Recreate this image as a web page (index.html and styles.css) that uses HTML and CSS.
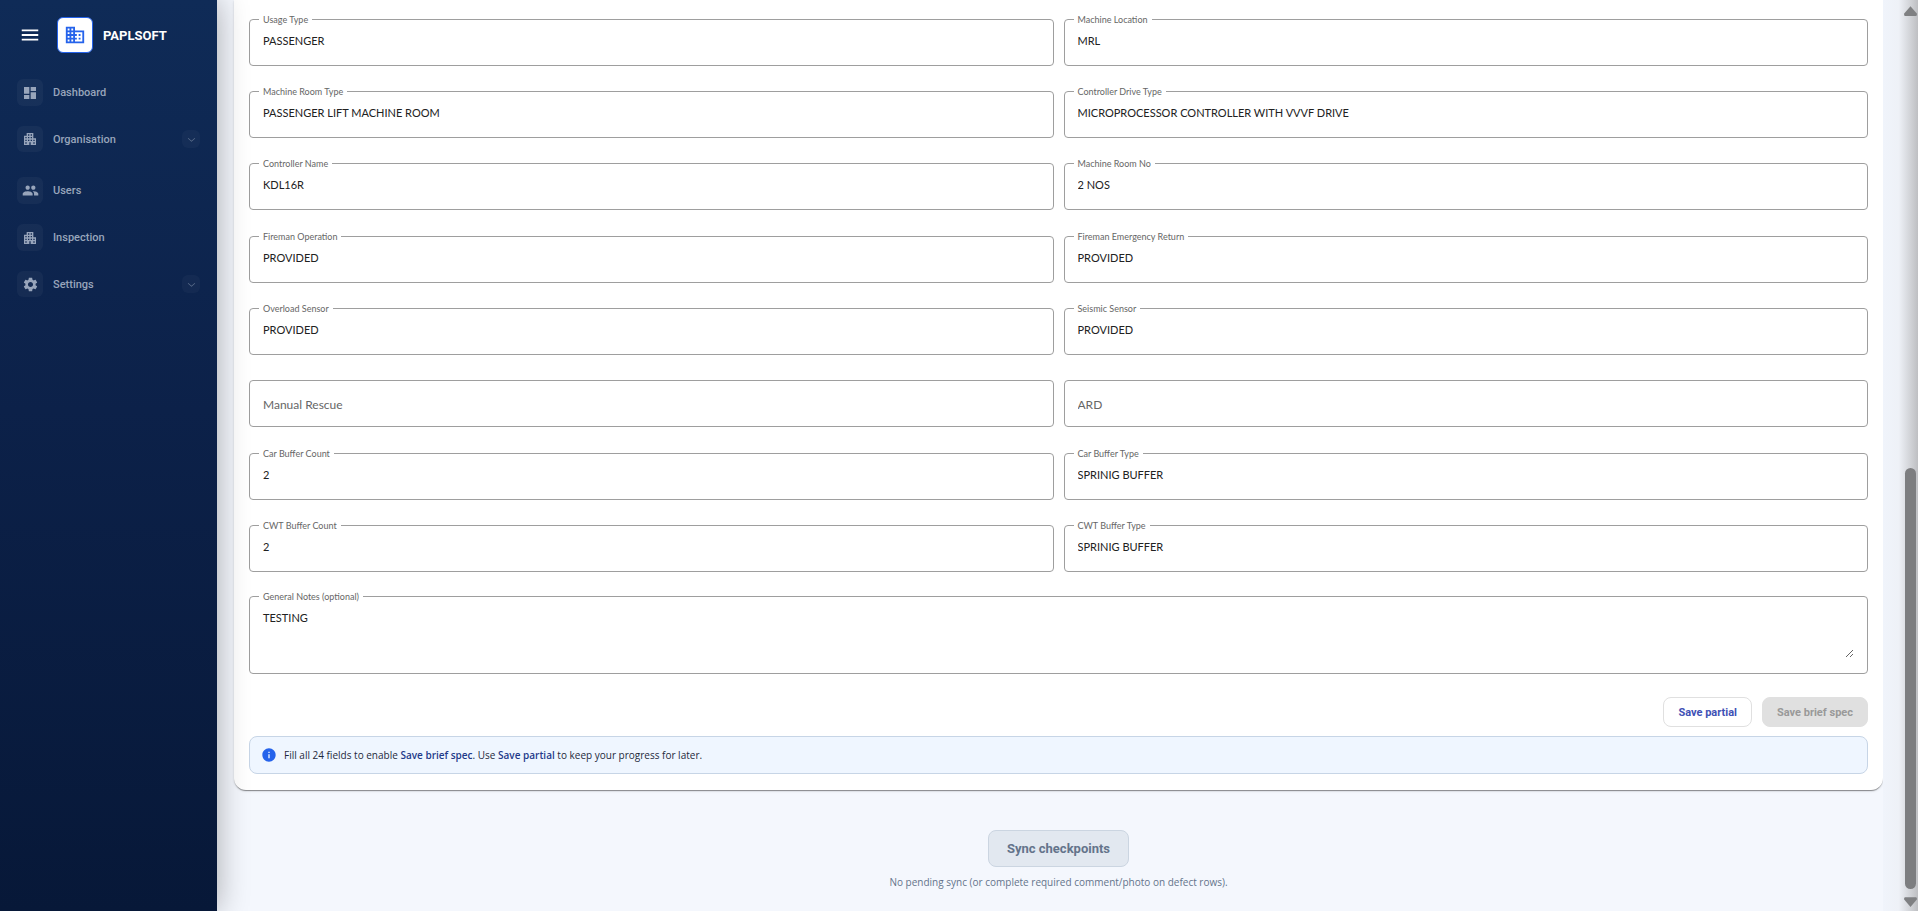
FILE: index.html
```html
<!DOCTYPE html>
<html lang="en">
<head>
<meta charset="utf-8">
<title>PAPLSOFT</title>
<link rel="stylesheet" href="styles.css">
</head>
<body>
<div class="app">
  <aside class="sidebar">
    <div class="brand">
      <button class="menu-button" type="button" aria-label="Toggle menu"><svg viewBox="0 0 24 24"><path d="M3 18h18v-2H3v2zm0-5h18v-2H3v2zm0-7v2h18V6H3z"/></svg></button>
      <span class="logo"><svg viewBox="0 0 24 24"><path d="M12 7V3H2v18h20V7H12zM6 19H4v-2h2v2zm0-4H4v-2h2v2zm0-4H4V9h2v2zm0-4H4V5h2v2zm4 12H8v-2h2v2zm0-4H8v-2h2v2zm0-4H8V9h2v2zm0-4H8V5h2v2zm10 12h-8v-2h2v-2h-2v-2h2v-2h-2V9h8v10zm-2-8h-2v2h2v-2zm0 4h-2v2h2v-2z"/></svg></span>
      <span class="brand-name">PAPLSOFT</span>
    </div>
    <nav class="nav">
      <a class="nav-item" href="#dashboard"><span class="nav-icon"><svg viewBox="0 0 24 24"><path d="M3 13h8V3H3v10zm0 8h8v-6H3v6zm10 0h8V11h-8v10zm0-18v6h8V3h-8z"/></svg></span>Dashboard</a>
      <a class="nav-item expandable" href="#organisation"><span class="nav-icon"><svg viewBox="0 0 24 24"><path d="M17 11V3H7v4H3v14h8v-4h2v4h8V11h-4zM7 19H5v-2h2v2zm0-4H5v-2h2v2zm0-4H5V9h2v2zm4 4H9v-2h2v2zm0-4H9V9h2v2zm0-4H9V5h2v2zm4 8h-2v-2h2v2zm0-4h-2V9h2v2zm0-4h-2V5h2v2zm4 12h-2v-2h2v2zm0-4h-2v-2h2v2z"/></svg></span>Organisation<span class="chevron"><svg viewBox="0 0 24 24"><path d="M5 8.600 12 14.600l7-6 1 1.400-8 7-8-7z"/></svg></span></a>
      <a class="nav-item" href="#users"><span class="nav-icon wide"><svg viewBox="0 0 24 24"><path d="M16 11c1.660 0 2.990-1.340 2.990-3S17.660 5 16 5s-3 1.340-3 3 1.340 3 3 3zm-8 0c1.660 0 2.990-1.340 2.990-3S9.660 5 8 5 5 6.340 5 8s1.340 3 3 3zm0 2c-2.330 0-7 1.170-7 3.500V19h14v-2.500C15 14.170 10.330 13 8 13zm8 0c-.29 0-.62.020-.97.050 1.160.840 1.970 1.970 1.970 3.450V19h6v-2.500c0-2.330-4.670-3.500-7-3.500z"/></svg></span>Users</a>
      <a class="nav-item" href="#inspection"><span class="nav-icon"><svg viewBox="0 0 24 24"><path d="M17 11V3H7v4H3v14h8v-4h2v4h8V11h-4zM7 19H5v-2h2v2zm0-4H5v-2h2v2zm0-4H5V9h2v2zm4 4H9v-2h2v2zm0-4H9V9h2v2zm0-4H9V5h2v2zm4 8h-2v-2h2v2zm0-4h-2V9h2v2zm0-4h-2V5h2v2zm4 12h-2v-2h2v2zm0-4h-2v-2h2v2z"/></svg></span>Inspection</a>
      <a class="nav-item expandable" href="#settings"><span class="nav-icon wide"><svg viewBox="0 0 24 24"><path d="M19.140 12.940c.04-.3.060-.61.060-.94 0-.32-.02-.64-.07-.94l2.030-1.580c.18-.14.230-.41.120-.61l-1.920-3.320c-.12-.22-.37-.29-.59-.22l-2.390.96c-.5-.38-1.030-.7-1.620-.94l-.36-2.540c-.04-.24-.24-.41-.48-.41h-3.840c-.24 0-.43.17-.47.410l-.36 2.540c-.59.240-1.130.570-1.620.940l-2.390-.96c-.22-.08-.47 0-.59.220L2.740 8.870c-.12.210-.08.470.120.610l2.030 1.580c-.05.300-.09.630-.09.940s.02.640.070.940l-2.030 1.580c-.18.140-.23.410-.12.610l1.920 3.320c.12.220.370.290.590.220l2.390-.96c.5.380 1.030.7 1.620.940l.36 2.540c.05.240.240.410.480.410h3.840c.24 0 .44-.17.470-.41l.36-2.540c.59-.24 1.130-.56 1.620-.94l2.390.96c.22.080.47 0 .59-.22l1.920-3.320c.12-.22.070-.47-.12-.61l-2.010-1.580zM12 15.600c-1.980 0-3.600-1.620-3.600-3.600s1.620-3.600 3.600-3.600 3.600 1.620 3.600 3.600-1.620 3.600-3.600 3.600z"/></svg></span>Settings<span class="chevron"><svg viewBox="0 0 24 24"><path d="M5 8.600 12 14.600l7-6 1 1.400-8 7-8-7z"/></svg></span></a>
    </nav>
  </aside>

  <main class="content">
    <form class="card">
      <div class="fields">
        <fieldset class="field"><legend><label for="usage">Usage Type</label></legend><input id="usage" value="PASSENGER"></fieldset>
        <fieldset class="field"><legend><label for="location">Machine Location</label></legend><input id="location" value="MRL"></fieldset>
        <fieldset class="field"><legend><label for="room-type">Machine Room Type</label></legend><input id="room-type" value="PASSENGER LIFT MACHINE ROOM"></fieldset>
        <fieldset class="field"><legend><label for="drive">Controller Drive Type</label></legend><input id="drive" value="MICROPROCESSOR CONTROLLER WITH VVVF DRIVE"></fieldset>
        <fieldset class="field"><legend><label for="controller">Controller Name</label></legend><input id="controller" value="KDL16R"></fieldset>
        <fieldset class="field"><legend><label for="room-no">Machine Room No</label></legend><input id="room-no" value="2 NOS"></fieldset>
      </div>
      <div class="fields">
        <fieldset class="field"><legend><label for="fireman">Fireman Operation</label></legend><input id="fireman" value="PROVIDED"></fieldset>
        <fieldset class="field"><legend><label for="fireman-return">Fireman Emergency Return</label></legend><input id="fireman-return" value="PROVIDED"></fieldset>
        <fieldset class="field"><legend><label for="overload">Overload Sensor</label></legend><input id="overload" value="PROVIDED"></fieldset>
        <fieldset class="field"><legend><label for="seismic">Seismic Sensor</label></legend><input id="seismic" value="PROVIDED"></fieldset>
        <div class="field empty"><input id="rescue" placeholder="Manual Rescue" aria-label="Manual Rescue"></div>
        <div class="field empty"><input id="ard" placeholder="ARD" aria-label="ARD"></div>
      </div>
      <div class="fields">
        <fieldset class="field"><legend><label for="car-count">Car Buffer Count</label></legend><input id="car-count" value="2"></fieldset>
        <fieldset class="field"><legend><label for="car-type">Car Buffer Type</label></legend><input id="car-type" value="SPRINIG BUFFER"></fieldset>
        <fieldset class="field"><legend><label for="cwt-count">CWT Buffer Count</label></legend><input id="cwt-count" value="2"></fieldset>
        <fieldset class="field"><legend><label for="cwt-type">CWT Buffer Type</label></legend><input id="cwt-type" value="SPRINIG BUFFER"></fieldset>
      </div>
      <fieldset class="field notes"><legend><label for="notes">General Notes (optional)</label></legend><textarea id="notes">TESTING</textarea></fieldset>
      <div class="actions">
        <button class="button" type="button">Save partial</button>
        <button class="button filled" type="submit" disabled>Save brief spec</button>
      </div>
      <div class="notice">
        <svg viewBox="0 0 24 24"><path d="M12 2C6.480 2 2 6.480 2 12s4.480 10 10 10 10-4.480 10-10S17.520 2 12 2zm1 15h-2v-6h2v6zm0-8h-2V7h2v2z"/></svg>
        <p>Fill all 24 fields to enable <strong>Save brief spec</strong>. Use <strong>Save partial</strong> to keep your progress for later.</p>
      </div>
    </form>
    <div class="sync">
      <button class="sync-button" type="button" disabled>Sync checkpoints</button>
      <p>No pending sync (or complete required comment/photo on defect rows).</p>
    </div>
  </main>

  <div class="scrollbar" aria-hidden="true">
    <svg viewBox="0 0 12 9"><path d="M6 0 12 7Q12 9 11 9H1Q0 9 0 7z"/></svg>
    <span class="scroll-space"></span>
    <span class="thumb"></span>
    <svg viewBox="0 0 12 9"><path d="M6 9 12 2Q12 0 11 0H1Q0 0 0 2z"/></svg>
  </div>
</div>
</body>
</html>
```
FILE: styles.css
```css
* { box-sizing: border-box; }
body { margin: 0; font-family: Lato, "Open Sans", sans-serif; color: #212121; }
p { margin: 0; }
svg { display: block; fill: currentColor; }
button, input, textarea { font: inherit; }

.app { position: relative; display: flex; min-height: 100vh; background: #f4f7fd; }

.sidebar {
  flex: 0 0 217px;
  padding: 17px 17px 0;
  z-index: 1;
  font-family: Roboto, sans-serif;
  color: #98a5bb;
  background: linear-gradient(180deg, #0f2b57 0%, #0c2149 45%, #071838 100%);
  box-shadow: 0 0 30px rgba(0, 0, 0, 0.32);
}
.brand { display: flex; align-items: center; margin-bottom: 26px; }
.menu-button { width: 26px; padding: 0 2px; border: 0; background: none; color: #fff; }
.menu-button svg { width: 22px; height: 22px; }
.logo { display: grid; place-items: center; width: 36px; height: 36px; margin: 0 10px 0 14px; border: 1px solid #2563eb; border-radius: 6px; background: #fff; color: #2563eb; }
.logo svg { width: 22px; height: 22px; }
.brand-name { font-size: 13px; font-weight: 700; color: #fff; }
.nav { display: flex; flex-direction: column; gap: 20px; }
.nav-item { display: flex; align-items: center; height: 27px; font-size: 11px; font-weight: 500; color: inherit; text-decoration: none; }
.nav-item.expandable { height: 26px; }
.nav-item.expandable + .nav-item { margin-top: 5px; }
.nav-icon { display: grid; place-items: center; width: 26px; height: 100%; margin-right: 10px; border-radius: 6px; background: rgba(255, 255, 255, 0.04); }
.nav-icon svg { width: 16px; height: 16px; }
.nav-icon.wide svg { width: 17px; height: 17px; }
.chevron { display: grid; place-items: center; width: 18px; height: 18px; margin-left: auto; border-radius: 6px; background: rgba(255, 255, 255, 0.03); color: #5c6f8c; }
.chevron svg { width: 11px; height: 11px; }

.content { flex: 1; min-width: 0; padding: 0 35px 0 17px; }
.card { position: relative; display: flex; flex-direction: column; padding: 19px 15px 16px; border-radius: 0 0 12px 12px; background: #fff; box-shadow: 0 2px 1px -1px rgba(0, 0, 0, 0.3), 0 1px 1px rgba(0, 0, 0, 0.14), 0 1px 3px rgba(0, 0, 0, 0.12); }
.fields { display: grid; grid-template-columns: 1fr 1fr; gap: 25px 10px; margin-bottom: 26px; }
.fields:nth-of-type(3) { margin-bottom: 24px; }
.field { position: relative; min-width: 0; height: 47px; margin: 0; padding: 0 13px; border: 1px solid #9e9e9e; border-radius: 4px; }
fieldset.field { height: 51px; margin-top: -4px; padding-left: 9px; }
.field legend { height: 9px; padding: 0 4px; font-size: 9px; line-height: 9px; color: #666; }
.field input, .field textarea { display: block; width: 100%; padding: 0; border: 0; outline: 0; background: none; font-size: 11px; line-height: 18px; color: #212121; }
fieldset.field input, fieldset.field textarea { margin-top: 8px; padding-left: 4px; }
.field.empty { display: flex; align-items: center; padding-top: 2px; }
.field.empty input { font-size: 12px; }
.field input::placeholder { color: #666; opacity: 1; }
fieldset.notes { height: 82px; }
.field.notes textarea { height: 49px; resize: vertical; }

.actions { display: flex; justify-content: flex-end; gap: 10px; margin: 23px 0 9px; }
.button { height: 30px; padding: 0 14px; border: 1px solid #e0e0e0; border-radius: 8px; background: #fff; color: #3f51b5; font-family: Roboto, sans-serif; font-size: 11px; font-weight: 700; }
.button.filled { background: #e0e0e0; color: #999; }
.notice { display: flex; align-items: center; gap: 7px; height: 38px; padding: 0 11px; border: 1px solid #c7d5e6; border-radius: 8px; background: #eff6ff; font-family: "Open Sans", sans-serif; font-size: 10px; color: #1e293b; }
.notice svg { width: 16px; height: 16px; color: #2563eb; }
.notice strong { font-weight: 600; color: #1e3a8a; }

.sync { display: flex; flex-direction: column; align-items: center; gap: 8px; padding-top: 40px; font-family: "Open Sans", sans-serif; font-size: 10px; color: #64748b; }
.sync-button { height: 37px; padding: 0 18px; border: 1px solid #cbd5e1; border-radius: 8px; background: #e2e8f0; color: #64748b; font-family: Roboto, sans-serif; font-size: 13px; font-weight: 700; }

.scrollbar { position: absolute; inset: 0 0 0 auto; width: 35px; display: flex; flex-direction: column; align-items: flex-end; padding: 6px 1px 4px 0; color: #7f8082; background: linear-gradient(90deg, #f0f4fb 0%, #eef1f7 45%, #bebfc2 100%); }
.scrollbar svg { width: 13px; height: 10px; }
.scroll-space { flex: 452; }
.thumb { flex: 421; width: 11px; margin: 0 1px 8px 0; border-radius: 6px; background: #7d7e80; }
```
